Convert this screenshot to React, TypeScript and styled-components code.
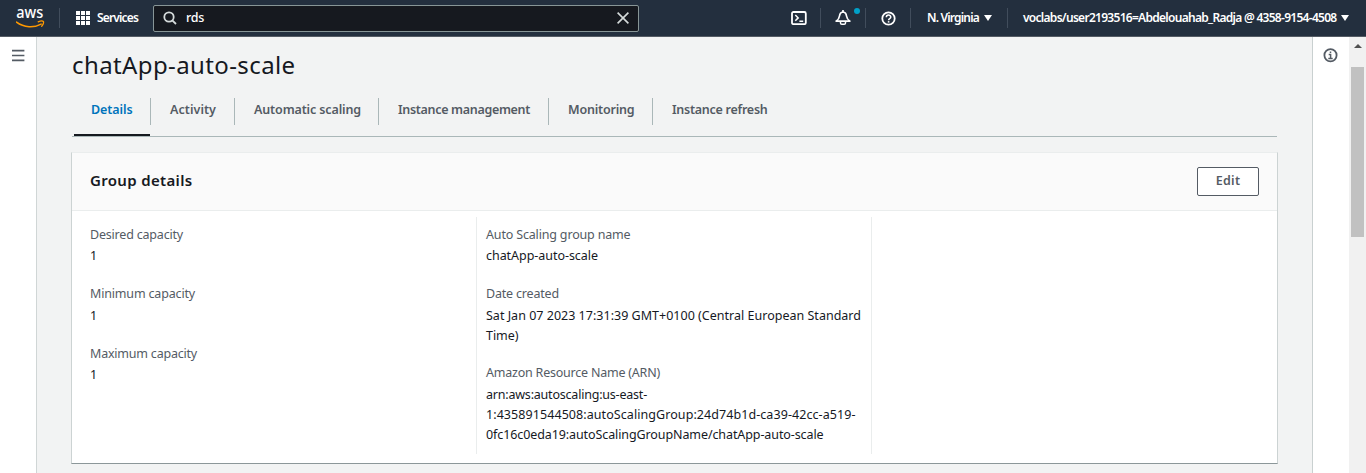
import React, { useLayoutEffect, useRef, useState } from "react";
import styled, { createGlobalStyle, css } from "styled-components";

const GlobalStyle = createGlobalStyle`
  * { box-sizing: border-box; }
  html, body { margin: 0; padding: 0; overflow: hidden; }
  body {
    font-family: "Noto Sans", "Open Sans", sans-serif;
    font-size: 12.5px;
    line-height: 19.8px;
    color: #16191f;
    background: #f2f3f3;
  }
  button { font: inherit; border: 0; background: none; padding: 0; color: inherit; }
  h1, h2, dl, dd, dt { margin: 0; }
`;

/* Tracks a line of text so that it fills the given width. */
const Line = styled.span`
  display: inline-block;
  white-space: nowrap;
`;

function Fit({ w, children }: { w: number; children: string }) {
  const ref = useRef<HTMLSpanElement>(null);
  const [spacing, setSpacing] = useState(0);
  useLayoutEffect(() => {
    const el = ref.current;
    if (!el) return;
    el.style.letterSpacing = "0px";
    const next = (w - el.getBoundingClientRect().width) / children.length;
    el.style.letterSpacing = `${next}px`;
    setSpacing(next);
  }, [w, children]);
  return (
    <Line ref={ref} style={{ letterSpacing: spacing }}>
      {children}
    </Line>
  );
}

const Screen = styled.div`
  height: 473px;
  display: flex;
  flex-direction: column;
`;

const TopBar = styled.header`
  flex: none;
  height: 37px;
  display: flex;
  align-items: center;
  background: #232f3e;
  border-bottom: 1px solid #545b64;
  color: #fff;
  font-size: 12px;
  font-weight: 600;
`;

const Logo = styled.div`
  width: 59px;
  height: 36px;
  padding-left: 16px;
  svg { display: block; }
`;

const Divider = styled.i`
  flex: none;
  width: 1px;
  height: 20px;
  background: #414d5c;
`;

const Services = styled.button`
  display: flex;
  align-items: center;
  gap: 7px;
  width: 93px;
  padding-left: 16px;
  line-height: 20px;
`;

const Search = styled.div`
  width: 486px;
  height: 27px;
  display: flex;
  align-items: center;
  padding: 0 9px 0 9px;
  border: 1px solid #879596;
  border-radius: 2px;
  background: #16191f;
`;

const Query = styled.span`
  flex: 1;
  padding-left: 9px;
  font-size: 12.5px;
  font-weight: 500;
`;

const NavRight = styled.nav`
  flex: 1;
  display: flex;
  align-items: center;
  justify-content: flex-end;
`;

const NavCell = styled.div<{ $w: number }>`
  flex: none;
  position: relative;
  width: ${(p) => p.$w}px;
  display: flex;
  align-items: center;
  justify-content: center;
`;

const NavMenu = styled.button<{ $w: number; $pad: number }>`
  width: ${(p) => p.$w}px;
  display: flex;
  align-items: center;
  gap: 5px;
  padding-left: ${(p) => p.$pad}px;
`;

const Caret = styled.i`
  border: 4px solid transparent;
  border-top: 6px solid #fff;
  border-bottom: 0;
  margin: 1px 0 0 -0.5px;
`;

const Dot = styled.i`
  position: absolute;
  left: 33px;
  top: -2px;
  width: 6px;
  height: 6px;
  border-radius: 50%;
  background: #00a1c9;
`;

const Body = styled.div`
  flex: 1;
  min-height: 0;
  display: flex;
`;

const Rail = styled.aside<{ $side: "left" | "right" }>`
  flex: none;
  width: 37px;
  background: #fff;
  padding-top: 11px;
  ${(p) =>
    p.$side === "left"
      ? css`
          border-right: 1px solid #d0d6d6;
          padding-left: 12px;
        `
      : css`
          border-left: 1px solid #c9d0d0;
          padding-left: 10px;
        `}
  svg { display: block; }
`;

const Scrollbar = styled.div`
  flex: none;
  width: 17px;
  background: #f1f1f1;
  display: flex;
  flex-direction: column;
  align-items: center;
`;

const ArrowUp = styled.i`
  margin: 7px 0 19px;
  border: 4px solid transparent;
  border-bottom-color: #505050;
  border-top: 0;
`;

const Thumb = styled.div`
  width: 13px;
  height: 170px;
  background: #c1c1c1;
`;

const Main = styled.main`
  flex: 1;
  min-width: 0;
  padding: 13px 35px 0 35px;
  background: #f2f3f3;
`;

const Title = styled.h1`
  height: 34px;
  font-size: 24px;
  line-height: 30px;
  font-weight: 400;
`;

const Tabs = styled.div`
  height: 53px;
  display: flex;
  padding-left: 2px;
  border-bottom: 1px solid #aab7b8;
`;

const Tab = styled.button<{ $w: number; $active?: boolean }>`
  width: ${(p) => p.$w}px;
  height: 52px;
  padding: 14px 0 0;
  display: flex;
  flex-direction: column;
  font-weight: 600;
  color: ${(p) => (p.$active ? "#0073bb" : "#545b64")};
  ${(p) => p.$active && css`border-bottom: 2px solid #16191f;`}
`;

const TabLabel = styled.span<{ $active?: boolean }>`
  display: block;
  align-self: stretch;
  height: 27px;
  padding: 2px 0 0 ${(p) => (p.$active ? 17 : 19)}px;
  text-align: left;
`;

const TabDivider = styled.i`
  width: 1px;
  height: 27px;
  margin-top: 14px;
  background: #aab7b8;
`;

const Card = styled.section`
  height: 312px;
  margin: 15px -1px 0;
  display: flex;
  flex-direction: column;
  background: #fff;
  border: 1px solid #ccd3d3;
  border-top-color: #eaeded;
  border-bottom-color: #8c9799;
`;

const CardHeader = styled.header`
  flex: none;
  height: 58px;
  display: flex;
  align-items: center;
  justify-content: space-between;
  padding: 0 18px 1px;
  background: #fafafa;
  border-bottom: 1px solid #eaeded;
`;

const CardTitle = styled.h2`
  padding-bottom: 2px;
  font-size: 15px;
  line-height: 20px;
  font-weight: 600;
`;

const EditButton = styled.button`
  width: 62px;
  height: 29px;
  display: flex;
  align-items: center;
  justify-content: center;
  padding-bottom: 1px;
  border: 1px solid #545b64;
  border-radius: 2px;
  background: #fff;
  color: #545b64;
  font-weight: 600;
`;

const Columns = styled.div`
  display: flex;
  height: 237px;
  margin-top: 6px;
`;

const Column = styled.dl<{ $w: number; $pad: number }>`
  width: ${(p) => p.$w}px;
  padding: 7.8px 0 0 ${(p) => p.$pad}px;
  display: flex;
  flex-direction: column;
  gap: 18px;
  border-right: 1px solid #eaeded;
`;

const Field = styled.div`
  dt { height: 21.6px; color: #545b64; }
  dd { display: flex; flex-direction: column; align-items: flex-start; }
`;

type FieldData = { label: string; w: number; lines: [string, number][] };

const capacity: FieldData[] = [
  { label: "Desired capacity", w: 93, lines: [["1", 6.5]] },
  { label: "Minimum capacity", w: 105, lines: [["1", 6.5]] },
  { label: "Maximum capacity", w: 107, lines: [["1", 6.5]] },
];

const group: FieldData[] = [
  { label: "Auto Scaling group name", w: 144.5, lines: [["chatApp-auto-scale", 112]] },
  {
    label: "Date created",
    w: 73,
    lines: [
      ["Sat Jan 07 2023 17:31:39 GMT+0100 (Central European Standard", 375],
      ["Time)", 32.5],
    ],
  },
  {
    label: "Amazon Resource Name (ARN)",
    w: 174,
    lines: [
      ["arn:aws:autoscaling:us-east-", 161],
      ["1:435891544508:autoScalingGroup:24d74b1d-ca39-42cc-a519-", 369.5],
      ["0fc16c0eda19:autoScalingGroupName/chatApp-auto-scale", 337.5],
    ],
  },
];

const tabs = [
  { label: "Details", text: 41.5, w: 76 },
  { label: "Activity", text: 46, w: 83 },
  { label: "Automatic scaling", text: 107, w: 143 },
  { label: "Instance management", text: 132, w: 169 },
  { label: "Monitoring", text: 66.5, w: 103 },
  { label: "Instance refresh", text: 95.5, w: 130 },
];

function Fields({ items }: { items: FieldData[] }) {
  return (
    <>
      {items.map((f) => (
        <Field key={f.label}>
          <dt><Fit w={f.w}>{f.label}</Fit></dt>
          <dd>{f.lines.map(([t, w]) => <Fit key={t} w={w}>{t}</Fit>)}</dd>
        </Field>
      ))}
    </>
  );
}

const LogoText = styled.text`
  font: 500 16.5px "Noto Sans", sans-serif;
  fill: #fff;
`;

const AwsLogo = () => (
  <svg width="30" height="34" viewBox="0 0 30 34">
    <LogoText x="0.3" y="18.3" textLength="27" lengthAdjust="spacingAndGlyphs">aws</LogoText>
    <path d="M0.5 22.2c7.6 5.6 17.6 5.8 24.6 1.9" fill="none" stroke="#f90" strokeWidth="1.6" strokeLinecap="round" />
    <path d="M22.2 21.8c2.2-.9 4.5-1 5.2-.3.6.7-.1 3.2-1.7 4.8" fill="none" stroke="#f90" strokeWidth="1.3" strokeLinecap="round" />
  </svg>
);

const GridIcon = () => (
  <svg width="14" height="14" viewBox="0 0 14 14" fill="#fff">
    {[0, 5, 10].map((y) => [0, 5, 10].map((x) => <rect key={`${x}-${y}`} x={x} y={y} width="4" height="4" />))}
  </svg>
);

const SearchIcon = () => (
  <svg width="14" height="14" viewBox="0 0 14 14" fill="none" stroke="#d5dbdb" strokeWidth="1.8">
    <circle cx="6" cy="6" r="4.7" />
    <path d="M9.3 9.3 13 13" />
  </svg>
);

const CloseIcon = () => (
  <svg width="12" height="12" viewBox="0 0 12 12" stroke="#d5dbdb" strokeWidth="1.6">
    <path d="M.6.6l10.8 10.8M11.4.6.6 11.4" />
  </svg>
);

const ShellIcon = () => (
  <svg width="16" height="14" viewBox="0 0 16 14" fill="none" stroke="#fff" strokeWidth="1.8">
    <rect x="1" y="1" width="13.8" height="12.2" rx="1.5" />
    <path d="M4.3 4 7.2 6.9 4.3 9.8M8.4 10.2h3.8" strokeWidth="1.5" />
  </svg>
);

const BellIcon = () => (
  <svg width="16" height="16" viewBox="0 0 16 16" fill="none" stroke="#fff" strokeWidth="1.7" strokeLinejoin="round">
    <path d="M8 0v2" />
    <path d="M8 2C6 2.2 4.8 3.6 4.5 6 4.2 8.4 3 9.9 1.1 11.1h13.8C13 9.9 11.8 8.4 11.5 6 11.2 3.6 10 2.2 8 2z" />
    <path d="M5.5 11.8v1.2q0 1.3 1.4 1.3h2.2q1.4 0 1.4-1.3v-1.2" strokeWidth="1.5" />
  </svg>
);

const HelpIcon = () => (
  <svg width="15" height="15" viewBox="0 0 15 15" fill="none" stroke="#fff" strokeWidth="1.8">
    <circle cx="7.5" cy="7.5" r="6.2" />
    <path d="M5.3 6.3c0-3 4.5-2.9 4.5-.2 0 1.6-2.2 1.5-2.2 3.1" strokeWidth="1.5" />
    <path d="M7.6 10.1v1.5" strokeWidth="1.6" />
  </svg>
);

const MenuIcon = () => (
  <svg width="13" height="16" viewBox="0 0 13 16" stroke="#545b64" strokeWidth="1.7">
    <path d="M0 2.7h12.4M0 7.5h12.4M0 12.3h12.4" />
  </svg>
);

const InfoIcon = () => (
  <svg width="15" height="15" viewBox="0 0 15 15" fill="none" stroke="#545b64" strokeWidth="1.8">
    <circle cx="7.5" cy="7.3" r="6.1" />
    <path d="M7.5 3.6v1.5M5.7 6.6h1.9v3.8M5.3 10.4h4.4" strokeWidth="1.5" />
  </svg>
);

export default function App() {
  return (
    <Screen>
      <GlobalStyle />
      <TopBar>
        <Logo><AwsLogo /></Logo>
        <Divider />
        <Services><GridIcon /><Fit w={41}>Services</Fit></Services>
        <Search>
          <SearchIcon />
          <Query><Fit w={18}>rds</Fit></Query>
          <CloseIcon />
        </Search>
        <NavRight>
          <NavCell $w={43}><ShellIcon /></NavCell>
          <Divider />
          <NavCell $w={44}><BellIcon /><Dot /></NavCell>
          <Divider />
          <NavCell $w={44}><HelpIcon /></NavCell>
          <Divider />
          <NavMenu $w={96} $pad={16}><Fit w={52}>N. Virginia</Fit><Caret /></NavMenu>
          <Divider />
          <NavMenu $w={358} $pad={15}>
            <Fit w={313.5}>voclabs/user2193516=Abdelouahab_Radja @ 4358-9154-4508</Fit><Caret />
          </NavMenu>
        </NavRight>
      </TopBar>
      <Body>
        <Rail $side="left"><MenuIcon /></Rail>
        <Main>
          <Title><Fit w={223.5}>chatApp-auto-scale</Fit></Title>
          <Tabs>
            {tabs.map((t, i) => (
              <React.Fragment key={t.label}>
                {i > 0 && <TabDivider />}
                <Tab $w={t.w} $active={i === 0}>
                  <TabLabel $active={i === 0}><Fit w={t.text}>{t.label}</Fit></TabLabel>
                </Tab>
              </React.Fragment>
            ))}
          </Tabs>
          <Card>
            <CardHeader>
              <CardTitle><Fit w={102.5}>Group details</Fit></CardTitle>
              <EditButton><Fit w={24.5}>Edit</Fit></EditButton>
            </CardHeader>
            <Columns>
              <Column $w={405} $pad={18}><Fields items={capacity} /></Column>
              <Column $w={395} $pad={9}><Fields items={group} /></Column>
            </Columns>
          </Card>
        </Main>
        <Rail $side="right"><InfoIcon /></Rail>
        <Scrollbar><ArrowUp /><Thumb /></Scrollbar>
      </Body>
    </Screen>
  );
}
